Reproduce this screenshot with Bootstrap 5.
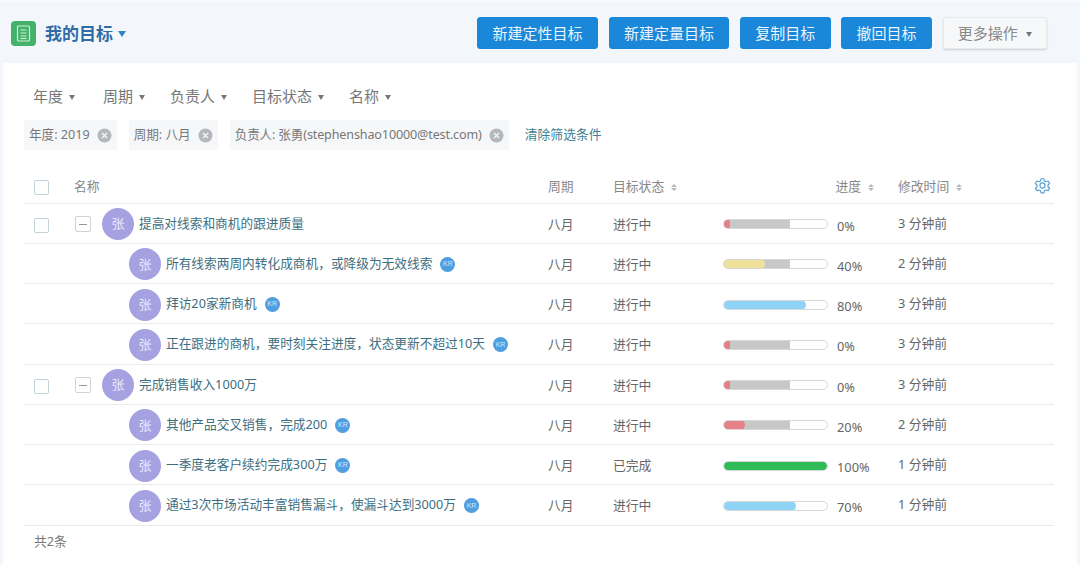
<!DOCTYPE html>
<html lang="zh">
<head>
<meta charset="utf-8">
<title>我的目标</title>
<link href="https://cdn.jsdelivr.net/npm/bootstrap@5.3.0/dist/css/bootstrap.min.css" rel="stylesheet">
<style>
html,body{height:564px;overflow:hidden}
body{background:#f3f6fa;font-family:"Noto Sans","Noto Sans CJK SC",sans-serif;font-size:12.8px;color:#666}
.top-bar{height:63px;padding:15px 33px 0 11px;border-top:2px solid #fafbfc}
.logo-box{width:25px;height:25px;border-radius:4px;background:#45b26b}
.page-title{font-size:17px;font-weight:700;color:#2f6ca6;margin-left:9px;line-height:25px}
.tri{display:inline-block;width:0;height:0;border-left:3.5px solid transparent;border-right:3.5px solid transparent;border-top:5px solid #777;vertical-align:2px}
.tri-title{border-left-width:4.5px;border-right-width:4.5px;border-top:6px solid #2a86c5;margin-left:5px;vertical-align:0}
.act-btn{height:32px;padding:0 14.3px;font-size:15px;line-height:28px;border-radius:3px;background:#1a87d8;border:1px solid #1a87d8;color:#eaf5fd}
.act-btn-more{background:#f7f8f9;border-color:#e8eaec;color:#888;box-shadow:0 1px 2px rgba(0,0,0,.16)}
.act-group{gap:10.7px}
.sheet{background:#fff;margin:0 3px;height:501px;padding:0 21px}
.filter-row{height:57px;padding:9px 0 0 9px;gap:25px;font-size:15px;color:#777}
.filter-row .tri{margin-left:6px}
.filter-row>span:first-child{margin-right:3px}
.tag-row{gap:12px;height:30px}
.chip{height:30px;background:#f6f7f9;padding:0 5px;font-size:12.6px;color:#777;line-height:30px;white-space:nowrap}
.chip svg{margin-left:7px;flex:none}
.chip-wide{letter-spacing:-.15px}
.clear-link{color:#3f7f92;text-decoration:none;margin-left:4px;font-size:12.8px}
.goal-table{table-layout:fixed;width:1030px;margin:20px 0 0;border-collapse:collapse}
.goal-table th,.goal-table td{padding:0;border-bottom:1px solid #e9ecee;vertical-align:middle;background:transparent;color:#666;font-weight:400;font-size:12.8px;white-space:nowrap}
.goal-table th{height:33px;color:#888;padding-top:1px}
.goal-table td{height:40.25px;padding-top:2px}
.goal-table td:last-child{padding-top:0}
.box{display:inline-block;width:15px;height:15px;border:1px solid #c4d2da;border-radius:2px;background:#fff;margin-left:10px;vertical-align:middle}
.minus{display:inline-flex;align-items:center;justify-content:center;width:16px;height:16px;border:1px solid #cfd3d6;border-radius:2px;flex:none;margin:0 11px 0 1px}
.minus::before{content:"";width:8px;height:1px;background:#999}
.ava{width:32px;height:32px;border-radius:50%;background:#a6a2e2;color:#e9e8fa;display:inline-flex;align-items:center;justify-content:center;font-size:13px;flex:none;margin-right:5px}
.child-row .name-wrap{padding-left:55px}
.goal-text{color:#3d6f82;font-size:12.7px;margin-bottom:2px}
.kr{display:inline-flex;align-items:center;justify-content:center;width:15px;height:15px;border-radius:50%;background:#4f9fe0;color:#cfe6f8;font-size:7px;margin-left:8px;font-family:"Liberation Sans",sans-serif}
.sort-mark{display:inline-flex;flex-direction:column;gap:1px;margin-left:7px;vertical-align:middle}
.sort-mark i{display:block;width:0;height:0;border-left:3px solid transparent;border-right:3px solid transparent}
.sort-mark i:first-child{border-bottom:3.5px solid #b4b8c0}
.sort-mark i:last-child{border-top:3.5px solid #b4b8c0}
.bar-track{width:105px;height:10px;border:1px solid #d8d8d8;border-radius:5px;background:#fff;position:relative;overflow:hidden;flex:none}
.bar-grey{position:absolute;left:0;top:-1px;bottom:-1px;width:64%;background:#c8c8c8}
.bar-fill{position:absolute;left:0;top:-1px;bottom:-1px;border-radius:5px}
.pct{margin-left:9px;padding-top:4px;color:#666;line-height:1}
.c-red{background:#e58287}.c-yel{background:#f0e19a}.c-blue{background:#8fd3f6}.c-green{background:#2fbc58}
.foot-note{padding:5px 0 0 10px;color:#777;line-height:20px}
.head-progress{padding-right:24px!important}
.gear-icon{margin-right:3px;margin-top:-3px}
</style>
</head>
<body>
<header class="top-bar d-flex justify-content-between align-items-start">
  <div class="d-flex align-items-center mt-1" >
    <span class="logo-box d-flex align-items-center justify-content-center">
      <svg width="15" height="17" viewBox="0 0 15 17" fill="none" stroke="#cdeed8" stroke-width="1.2"><rect x="1.5" y="1" width="12" height="15" rx="1"/><path d="M4.5 5h6M4.500 8h6M4.500 11h6M4.500 13.500h6"/></svg>
    </span>
    <span class="page-title">我的目标</span><span class="tri tri-title"></span>
  </div>
  <div class="d-flex act-group">
    <button type="button" class="btn act-btn">新建定性目标</button>
    <button type="button" class="btn act-btn">新建定量目标</button>
    <button type="button" class="btn act-btn">复制目标</button>
    <button type="button" class="btn act-btn">撤回目标</button>
    <button type="button" class="btn act-btn act-btn-more">更多操作 <span class="tri ms-1"></span></button>
  </div>
</header>
<main class="sheet">
  <div class="filter-row d-flex align-items-center">
    <span>年度<span class="tri"></span></span>
    <span>周期<span class="tri"></span></span>
    <span>负责人<span class="tri"></span></span>
    <span>目标状态<span class="tri"></span></span>
    <span>名称<span class="tri"></span></span>
  </div>
  <div class="tag-row d-flex align-items-center">
    <span class="chip d-flex align-items-center">年度: 2019<svg width="15" height="15" viewBox="0 0 15 15"><circle cx="7.5" cy="7.5" r="7" fill="#b4b7bb"/><path d="M5 5l5 5M10 5l-5 5" stroke="#f4f4f4" stroke-width="1.4"/></svg></span>
    <span class="chip d-flex align-items-center">周期: 八月<svg width="15" height="15" viewBox="0 0 15 15"><circle cx="7.5" cy="7.5" r="7" fill="#b4b7bb"/><path d="M5 5l5 5M10 5l-5 5" stroke="#f4f4f4" stroke-width="1.4"/></svg></span>
    <span class="chip chip-wide d-flex align-items-center">负责人: 张勇(stephenshao10000@test.com)<svg width="15" height="15" viewBox="0 0 15 15"><circle cx="7.5" cy="7.5" r="7" fill="#b4b7bb"/><path d="M5 5l5 5M10 5l-5 5" stroke="#f4f4f4" stroke-width="1.4"/></svg></span>
    <a class="clear-link" href="#">清除筛选条件</a>
  </div>
  <table class="table goal-table">
    <colgroup><col style="width:50px"><col style="width:474px"><col style="width:65px"><col style="width:110px"><col style="width:175px"><col style="width:156px"></colgroup>
    <thead>
      <tr>
        <th><span class="box"></span></th>
        <th>名称</th>
        <th>周期</th>
        <th>目标状态<span class="sort-mark"><i></i><i></i></span></th>
        <th class="text-end head-progress">进度<span class="sort-mark"><i></i><i></i></span></th>
        <th>
          <div class="d-flex justify-content-between align-items-center">
            <span>修改时间<span class="sort-mark"><i></i><i></i></span></span>
            <svg class="gear-icon" width="17" height="17" viewBox="0 0 24 24" fill="none" stroke="#5aa5d2" stroke-width="1.7" stroke-linejoin="round"><path d="M10 2.5h4l.7 3 2.4 1.2 2.9-1 2 3.5-2.2 2.1v2.4l2.2 2.1-2 3.5-2.9-1-2.4 1.2-.7 3h-4l-.7-3-2.4-1.2-2.9 1-2-3.5 2.2-2.1v-2.4L1.9 9.200l2-3.500 2.900 1 2.400-1.200z"/><circle cx="12" cy="12" r="3.600"/></svg>
          </div>
        </th>
      </tr>
    </thead>
    <tbody>
      <tr>
        <td><span class="box"></span></td>
        <td><div class="d-flex align-items-center"><span class="minus"></span><span class="ava">张</span><span class="goal-text">提高对线索和商机的跟进质量</span></div></td>
        <td>八月</td><td>进行中</td>
        <td><div class="d-flex align-items-center"><div class="bar-track"><div class="bar-grey"></div><div class="bar-fill c-red" style="width:6px"></div></div><span class="pct">0%</span></div></td>
        <td>3 分钟前</td>
      </tr>
      <tr class="child-row">
        <td></td>
        <td><div class="name-wrap d-flex align-items-center"><span class="ava">张</span><span class="goal-text">所有线索两周内转化成商机，或降级为无效线索</span><span class="kr">KR</span></div></td>
        <td>八月</td><td>进行中</td>
        <td><div class="d-flex align-items-center"><div class="bar-track"><div class="bar-grey"></div><div class="bar-fill c-yel" style="width:40%"></div></div><span class="pct">40%</span></div></td>
        <td>2 分钟前</td>
      </tr>
      <tr class="child-row">
        <td></td>
        <td><div class="name-wrap d-flex align-items-center"><span class="ava">张</span><span class="goal-text">拜访20家新商机</span><span class="kr">KR</span></div></td>
        <td>八月</td><td>进行中</td>
        <td><div class="d-flex align-items-center"><div class="bar-track"><div class="bar-fill c-blue" style="width:80%"></div></div><span class="pct">80%</span></div></td>
        <td>3 分钟前</td>
      </tr>
      <tr class="child-row">
        <td></td>
        <td><div class="name-wrap d-flex align-items-center"><span class="ava">张</span><span class="goal-text">正在跟进的商机，要时刻关注进度，状态更新不超过10天</span><span class="kr">KR</span></div></td>
        <td>八月</td><td>进行中</td>
        <td><div class="d-flex align-items-center"><div class="bar-track"><div class="bar-grey"></div><div class="bar-fill c-red" style="width:6px"></div></div><span class="pct">0%</span></div></td>
        <td>3 分钟前</td>
      </tr>
      <tr>
        <td><span class="box"></span></td>
        <td><div class="d-flex align-items-center"><span class="minus"></span><span class="ava">张</span><span class="goal-text">完成销售收入1000万</span></div></td>
        <td>八月</td><td>进行中</td>
        <td><div class="d-flex align-items-center"><div class="bar-track"><div class="bar-grey"></div><div class="bar-fill c-red" style="width:6px"></div></div><span class="pct">0%</span></div></td>
        <td>3 分钟前</td>
      </tr>
      <tr class="child-row">
        <td></td>
        <td><div class="name-wrap d-flex align-items-center"><span class="ava">张</span><span class="goal-text">其他产品交叉销售，完成200</span><span class="kr">KR</span></div></td>
        <td>八月</td><td>进行中</td>
        <td><div class="d-flex align-items-center"><div class="bar-track"><div class="bar-grey"></div><div class="bar-fill c-red" style="width:20%"></div></div><span class="pct">20%</span></div></td>
        <td>2 分钟前</td>
      </tr>
      <tr class="child-row">
        <td></td>
        <td><div class="name-wrap d-flex align-items-center"><span class="ava">张</span><span class="goal-text">一季度老客户续约完成300万</span><span class="kr">KR</span></div></td>
        <td>八月</td><td>已完成</td>
        <td><div class="d-flex align-items-center"><div class="bar-track"><div class="bar-fill c-green" style="width:100%"></div></div><span class="pct">100%</span></div></td>
        <td>1 分钟前</td>
      </tr>
      <tr class="child-row">
        <td></td>
        <td><div class="name-wrap d-flex align-items-center"><span class="ava">张</span><span class="goal-text">通过3次市场活动丰富销售漏斗，使漏斗达到3000万</span><span class="kr">KR</span></div></td>
        <td>八月</td><td>进行中</td>
        <td><div class="d-flex align-items-center"><div class="bar-track"><div class="bar-fill c-blue" style="width:70%"></div></div><span class="pct">70%</span></div></td>
        <td>1 分钟前</td>
      </tr>
    </tbody>
  </table>
  <div class="foot-note">共2条</div>
</main>
<script src="https://cdn.jsdelivr.net/npm/bootstrap@5.3.0/dist/js/bootstrap.bundle.min.js"></script>
</body>
</html>
